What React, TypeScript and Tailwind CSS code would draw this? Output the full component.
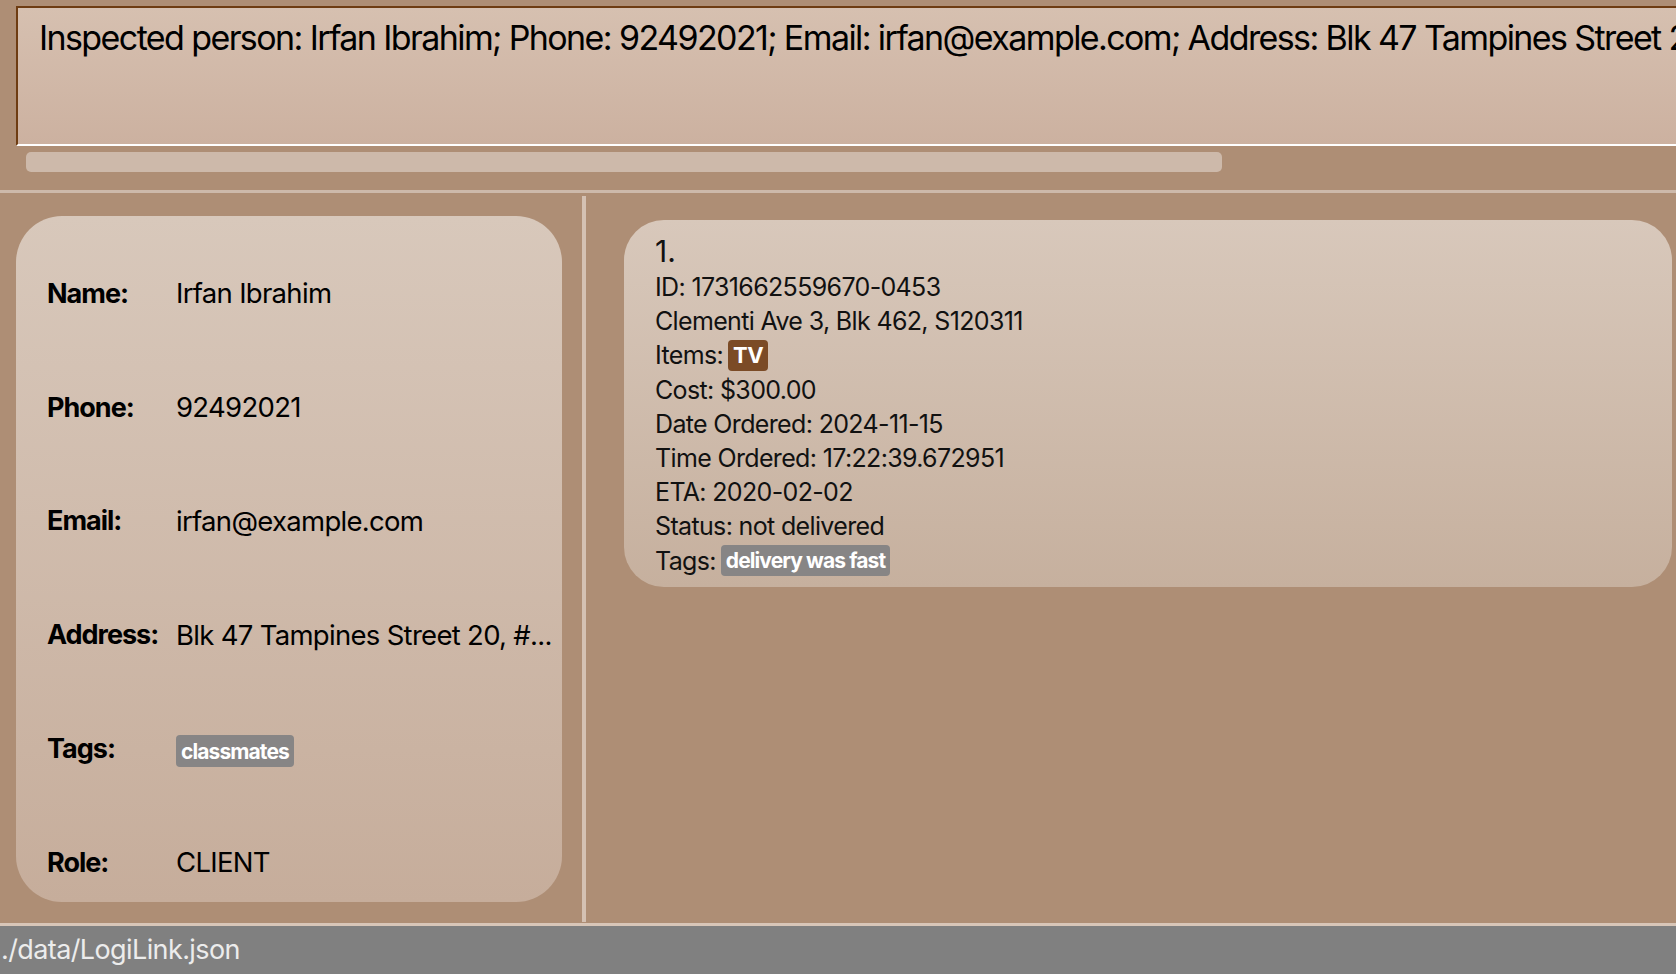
import React from "react";

const Tag = ({ text, className }: { text: string; className: string }) => (
  <span className={`inline-flex items-center rounded-[4px] font-bold text-white ${className}`}>{text}</span>
);

export default function App() {
  const rows: { label: string; value: React.ReactNode }[] = [
    { label: "Name:", value: "Irfan Ibrahim" },
    { label: "Phone:", value: "92492021" },
    { label: "Email:", value: "irfan@example.com" },
    { label: "Address:", value: "Blk 47 Tampines Street 20, #..." },
    {
      label: "Tags:",
      value: <Tag text="classmates" className="h-[32px] px-[5px] bg-[#878585] text-[21px] tracking-[-0.9px]" />,
    },
    { label: "Role:", value: "CLIENT" },
  ];

  const lines = [
    "ID: 1731662559670-0453",
    "Clementi Ave 3, Blk 462, S120311",
  ];

  return (
    <div className="w-[1676px] h-[974px] bg-[#ae8e75] flex flex-col overflow-hidden font-['Inter','Noto_Sans',sans-serif] text-black">
      {/* header */}
      <div className="h-[190px] flex flex-col pl-[16px] pt-[6px] shrink-0">
        <div className="h-[140px] border-l-2 border-t-2 border-[#6e3c12] border-b-2 border-b-white bg-linear-to-b from-[#d6c0b0] to-[#ccb1a0] pl-[21px] pt-[8px] overflow-hidden whitespace-nowrap">
          <span className="text-[34px] leading-[44px] tracking-[-1.6px]">
            Inspected person: Irfan Ibrahim; Phone: 92492021; Email: irfan@example.com; Address: Blk 47 Tampines Street 20, #17-35; Tags: [classmates]
          </span>
        </div>
        <div className="mt-[6px] ml-[10px] w-[1196px] h-[20px] rounded-[5px] bg-[#cdb9aa]" />
      </div>
      <div className="h-[3px] bg-[#cdb9aa] shrink-0" />

      {/* main */}
      <div className="flex-1 flex min-h-0">
        <div className="w-[582px] shrink-0 pl-[16px] pr-[20px] pt-[23px] pb-[21px] flex">
          <div className="flex-1 rounded-[46px] bg-linear-to-b from-[#d8c8bb] to-[#c6ad9b] pl-[31px] pt-[58px] flex flex-col gap-[73.8px]">
            {rows.map((r) => (
              <div key={r.label} className="h-[40px] flex items-center whitespace-nowrap">
                <div className="w-[129px] shrink-0 font-bold text-[27px] tracking-[-1px]">{r.label}</div>
                <div className="text-[27.5px] tracking-[-0.7px]">{r.value}</div>
              </div>
            ))}
          </div>
        </div>
        <div className="w-[4px] mt-[3px] mb-[1px] bg-[#d4c1b3] shrink-0" />
        <div className="flex-1 pl-[38px] pr-[4px] pt-[27px]">
          <div className="rounded-[40px] bg-linear-to-b from-[#d8c8bb] to-[#c6b09e] pl-[31px] pt-[12px] pb-[9px] text-[#111]">
            <div className="text-[30px] leading-[38px]">1.</div>
            <div className="text-[25px] leading-[34.2px] tracking-[-0.65px]">
              {lines.map((l) => (
                <div key={l}>{l}</div>
              ))}
              <div className="flex items-center gap-[5px]">
                Items: <Tag text="TV" className="h-[31px] px-[5px] bg-[#7b4b26] text-[22px] tracking-[-0.5px]" />
              </div>
              <div>Cost: $300.00</div>
              <div>Date Ordered: 2024-11-15</div>
              <div>Time Ordered: 17:22:39.672951</div>
              <div>ETA: 2020-02-02</div>
              <div>Status: not delivered</div>
              <div className="flex items-center gap-[5px]">
                Tags: <Tag text="delivery was fast" className="h-[31px] px-[5px] bg-[#878585] text-[21px] tracking-[-0.9px]" />
              </div>
            </div>
          </div>
        </div>
      </div>

      <div className="h-[3px] bg-[#d8c6b8] shrink-0" />
      <div className="h-[48px] bg-[#808080] shrink-0 flex items-center pl-[1px]">
        <span className="text-[27px] text-[#ececec] tracking-[-0.6px]">./data/LogiLink.json</span>
      </div>
    </div>
  );
}
